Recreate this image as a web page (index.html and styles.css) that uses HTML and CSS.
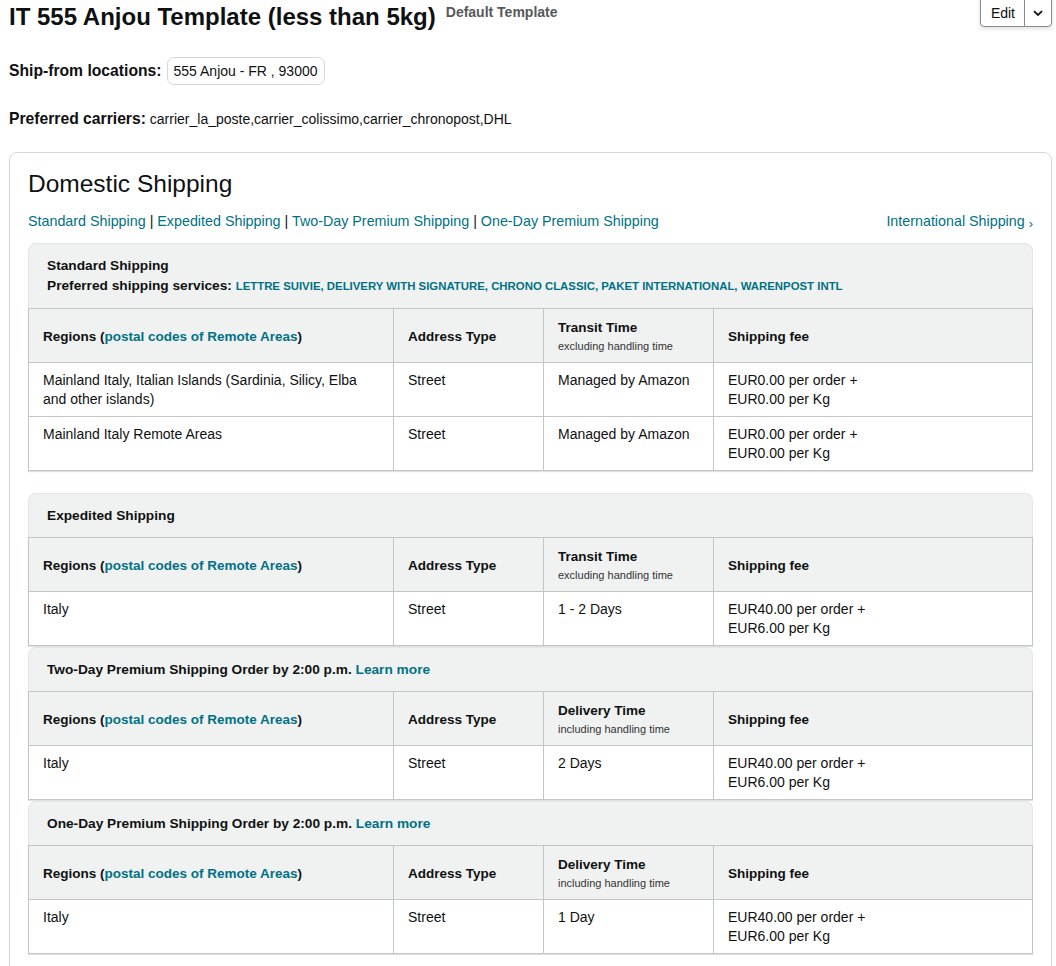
FILE: index.html
```html
<!DOCTYPE html>
<html>
<head>
<meta charset="utf-8">
<link rel="stylesheet" href="styles.css">
</head>
<body>
<div class="page">
  <div class="top">
    <div class="title-wrap">
      <h1 class="title">IT 555 Anjou Template (less than 5kg)</h1>
      <span class="default">Default Template</span>
    </div>
    <div class="split">
      <span class="split-main">Edit</span>
      <span class="split-arrow"><svg width="10" height="7" viewBox="0 0 10 7"><path d="M1 1.2 L5 5 L9 1.2" fill="none" stroke="#0f1111" stroke-width="1.8"/></svg></span>
    </div>
  </div>

  <div class="shipfrom">
    <span class="label">Ship-from locations:</span>
    <span class="pill">555 Anjou - FR , 93000</span>
  </div>

  <div class="carriers">
    <span class="label">Preferred carriers:</span> carrier_la_poste,carrier_colissimo,carrier_chronopost,DHL
  </div>

  <div class="card">
    <h2 class="card-title">Domestic Shipping</h2>
    <div class="nav">
      <div class="nav-left">
        <a class="link">Standard Shipping</a> | <a class="link">Expedited Shipping</a> | <a class="link">Two-Day Premium Shipping</a> | <a class="link">One-Day Premium Shipping</a>
      </div>
      <a class="link intl">International Shipping <span class="chev">›</span></a>
    </div>

    <div class="section first">
      <div class="sec-head two">
        <div class="bold">Standard Shipping</div>
        <div class="bold">Preferred shipping services: <span class="svc">LETTRE SUIVIE, DELIVERY WITH SIGNATURE, CHRONO CLASSIC, PAKET INTERNATIONAL, WARENPOST INTL</span></div>
      </div>
      <table class="tbl">
        <colgroup><col class="c1"><col class="c2"><col class="c3"><col class="c4"></colgroup>
        <tr class="head">
          <th>Regions (<a class="link">postal codes of Remote Areas</a>)</th>
          <th>Address Type</th>
          <th>Transit Time<div class="sub">excluding handling time</div></th>
          <th>Shipping fee</th>
        </tr>
        <tr>
          <td>Mainland Italy, Italian Islands (Sardinia, Silicy, Elba and other islands)</td>
          <td>Street</td>
          <td>Managed by Amazon</td>
          <td>EUR0.00 per order +<br>EUR0.00 per Kg</td>
        </tr>
        <tr>
          <td>Mainland Italy Remote Areas</td>
          <td>Street</td>
          <td>Managed by Amazon</td>
          <td>EUR0.00 per order +<br>EUR0.00 per Kg</td>
        </tr>
      </table>
    </div>

    <div class="section gap-lg">
      <div class="sec-head">
        <div class="bold">Expedited Shipping</div>
      </div>
      <table class="tbl">
        <colgroup><col class="c1"><col class="c2"><col class="c3"><col class="c4"></colgroup>
        <tr class="head">
          <th>Regions (<a class="link">postal codes of Remote Areas</a>)</th>
          <th>Address Type</th>
          <th>Transit Time<div class="sub">excluding handling time</div></th>
          <th>Shipping fee</th>
        </tr>
        <tr>
          <td>Italy</td>
          <td>Street</td>
          <td>1 - 2 Days</td>
          <td>EUR40.00 per order +<br>EUR6.00 per Kg</td>
        </tr>
      </table>
    </div>

    <div class="section gap-sm">
      <div class="sec-head">
        <div class="bold">Two-Day Premium Shipping Order by 2:00 p.m. <a class="link">Learn more</a></div>
      </div>
      <table class="tbl">
        <colgroup><col class="c1"><col class="c2"><col class="c3"><col class="c4"></colgroup>
        <tr class="head">
          <th>Regions (<a class="link">postal codes of Remote Areas</a>)</th>
          <th>Address Type</th>
          <th>Delivery Time<div class="sub">including handling time</div></th>
          <th>Shipping fee</th>
        </tr>
        <tr>
          <td>Italy</td>
          <td>Street</td>
          <td>2 Days</td>
          <td>EUR40.00 per order +<br>EUR6.00 per Kg</td>
        </tr>
      </table>
    </div>

    <div class="section gap-sm">
      <div class="sec-head">
        <div class="bold">One-Day Premium Shipping Order by 2:00 p.m. <a class="link">Learn more</a></div>
      </div>
      <table class="tbl">
        <colgroup><col class="c1"><col class="c2"><col class="c3"><col class="c4"></colgroup>
        <tr class="head">
          <th>Regions (<a class="link">postal codes of Remote Areas</a>)</th>
          <th>Address Type</th>
          <th>Delivery Time<div class="sub">including handling time</div></th>
          <th>Shipping fee</th>
        </tr>
        <tr>
          <td>Italy</td>
          <td>Street</td>
          <td>1 Day</td>
          <td>EUR40.00 per order +<br>EUR6.00 per Kg</td>
        </tr>
      </table>
    </div>
  </div>
</div>
</body>
</html>
```

FILE: styles.css
```css
html, body {
  margin: 0;
  padding: 0;
  background: #ffffff;
}
body {
  font-family: "Liberation Sans", Arial, sans-serif;
  color: #0f1111;
  font-size: 14px;
  line-height: 20px;
}
.page {
  padding: 0 4px 0 9px;
}
.top {
  display: flex;
  justify-content: space-between;
  align-items: flex-start;
}
.title-wrap {
  display: flex;
  align-items: flex-start;
}
.title {
  margin: 2px 0 0 0;
  font-size: 24px;
  line-height: 30px;
  font-weight: 700;
}
.default {
  margin: 3px 0 0 10px;
  font-size: 14px;
  font-weight: 700;
  color: #565959;
  line-height: 18px;
}
.split {
  display: flex;
  margin-top: -3px;
  border: 1px solid #888c8c;
  border-radius: 0 0 4px 4px;
  box-shadow: 0 2px 4px rgba(0,0,0,0.12);
  background: #fff;
  height: 28px;
}
.split-main {
  display: flex;
  align-items: center;
  padding: 2px 9px 0 10px;
  font-size: 14px;
}
.split-arrow {
  display: flex;
  align-items: center;
  justify-content: center;
  width: 26px;
  padding-top: 2px;
  border-left: 1px solid #888c8c;
}
.shipfrom {
  display: flex;
  align-items: center;
  margin-top: 24px;
  height: 30px;
}
.label {
  font-size: 15.7px;
  font-weight: 700;
}
.pill {
  display: inline-flex;
  align-items: center;
  margin-left: 5px;
  height: 26px;
  padding: 0 6px;
  border: 1px solid #d5d9d9;
  border-radius: 7px;
  font-size: 14px;
}
.carriers {
  margin-top: 23px;
  line-height: 20px;
  font-size: 14px;
}
.card {
  margin-top: 23px;
  border: 1px solid #d5d9d9;
  border-radius: 8px;
  padding: 15px 18px 20px 18px;
  min-height: 900px;
}
.card-title {
  margin: 0;
  font-size: 24.5px;
  line-height: 32px;
  font-weight: 400;
}
.nav {
  display: flex;
  justify-content: space-between;
  margin-top: 11px;
  line-height: 20px;
  font-size: 14.3px;
}
.link {
  color: #007185;
  text-decoration: none;
}
.chev {
  font-size: 13px;
  position: relative;
  top: 2px;
}
.section.first {
  margin-top: 11px;
}
.section.gap-lg {
  margin-top: 22px;
}
.section.gap-sm {
  margin-top: 1px;
}
.sec-head {
  background: #f0f2f2;
  border: 1px solid #e3e6e6;
  border-bottom: none;
  border-radius: 8px 8px 0 0;
  padding: 12px 18px 11px 18px;
}
.sec-head.two {
  padding-bottom: 12px;
}
.bold {
  font-weight: 700;
  font-size: 13.7px;
  line-height: 20px;
  height: 20px;
}
.svc {
  color: #007185;
  font-size: 11.4px;
}
.tbl {
  width: 100%;
  border-collapse: collapse;
  table-layout: fixed;
  box-shadow: 0 1px 1px rgba(0,0,0,0.12);
}
.c1 { width: 365px; }
.c2 { width: 150px; }
.c3 { width: 170px; }
.c4 { width: auto; }
.tbl tr {
  height: 54px;
}
.tbl th, .tbl td {
  border: 1px solid #c4c6c6;
  padding: 8px 14px 6px 14px;
  text-align: left;
  vertical-align: top;
  line-height: 19px;
}
.tbl th {
  background: #f0f2f2;
  font-weight: 700;
  font-size: 13.5px;
  vertical-align: middle;
  padding: 7px 14px 6px 14px;
}
.sub {
  font-size: 11px;
  font-weight: 400;
  line-height: 18px;
  color: #333;
}
```
